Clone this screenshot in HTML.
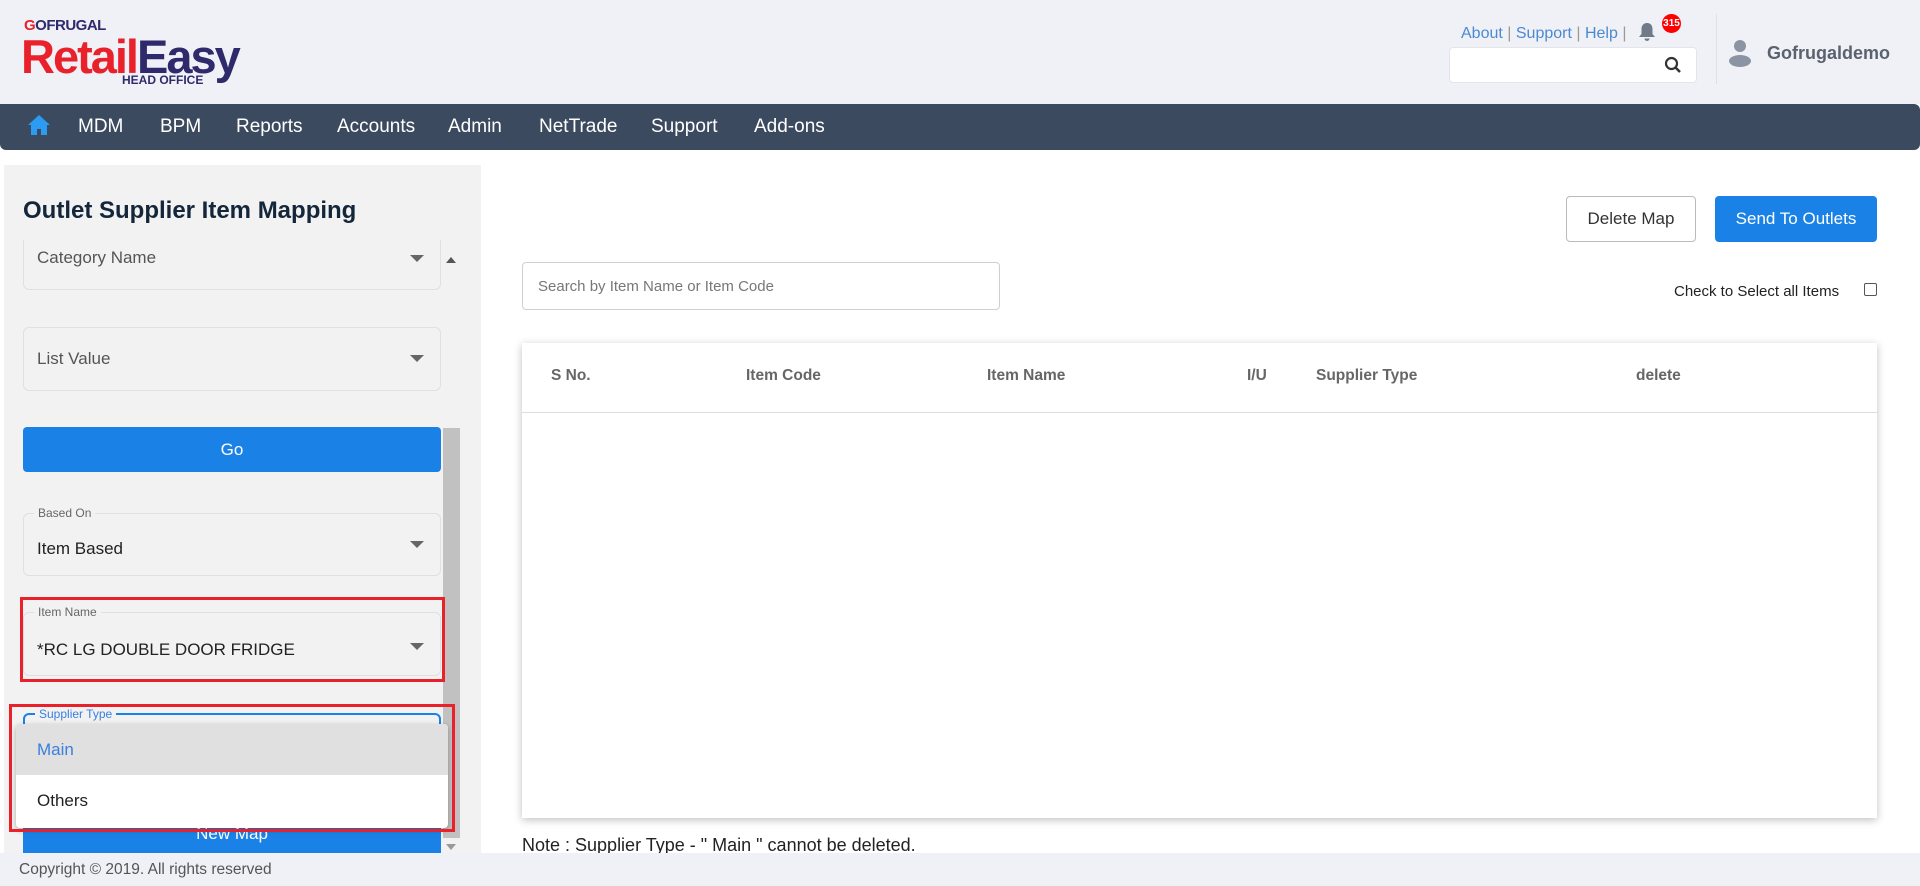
<!DOCTYPE html>
<html><head><meta charset="utf-8"><style>
*{box-sizing:border-box;margin:0;padding:0}
body{width:1920px;height:886px;overflow:hidden;background:#fff;font-family:"Liberation Sans",sans-serif;position:relative}
.a{position:absolute}
.hdr{left:0;top:0;width:1920px;height:104px;background:#f0f1f6}
.nav{left:0;top:104px;width:1920px;height:46px;background:#3c4a5f;border-radius:0 6px 6px 6px}
.nav span{position:absolute;top:12px;color:#fff;font-size:19px}
.panel{left:4px;top:165px;width:477px;height:688px;background:#f2f2f2}
.fld{position:absolute;left:23px;width:418px;border:1.5px solid #dde0e4;border-radius:6px}
.fld .v{position:absolute;left:13px;font-size:17px;color:#222}
.fld .c{position:absolute;right:16px;width:0;height:0;border-left:7px solid transparent;border-right:7px solid transparent;border-top:7px solid #666}
.lbl{position:absolute;left:10px;top:-8px;font-size:12px;color:#666;background:#f2f2f2;padding:0 4px}
.btn{position:absolute;background:#1a82e6;color:#fff;text-align:center;border-radius:4px;font-size:17px}
.th{position:absolute;top:367px;font-size:15.5px;font-weight:bold;color:#666}
</style></head><body>
<div class="a hdr"></div>
<div class="a" style="left:24px;top:17px;font-size:15px;font-weight:bold;color:#2e2a6b;letter-spacing:-0.5px"><span style="color:#e8212b">G</span>OFRUGAL</div>
<div class="a" style="left:21px;top:33px;font-size:47px;font-weight:bold;letter-spacing:-2px;line-height:48px"><span style="color:#e8212b">Retail</span><span style="color:#2e2a6b">Easy</span></div>
<div class="a" style="left:122px;top:73px;font-size:12px;font-weight:bold;color:#2e2a6b">HEAD OFFICE</div>

<div class="a" style="left:1461px;top:25px;font-size:16px;color:#4a8ad0">About <span style="color:#999">|</span> Support <span style="color:#999">|</span> Help <span style="color:#999">|</span></div>
<svg class="a" style="left:1638px;top:22px" width="18" height="20" viewBox="0 0 18 20"><path d="M9 1c-3.5 0-5.5 2.5-5.5 6v5L1 15h16l-2.5-3V7C14.5 3.5 12.5 1 9 1z M6.5 16.5a2.5 2.5 0 0 0 5 0z" fill="#707a88"/></svg>
<div class="a" style="left:1662px;top:14px;width:19px;height:19px;border-radius:50%;background:#f00;color:#fff;font-size:10px;font-weight:bold;line-height:19px;text-align:center">315</div>
<div class="a" style="left:1449px;top:47px;width:248px;height:36px;background:#fff;border:1px solid #e3e5ea;border-radius:4px"></div>
<svg class="a" style="left:1664px;top:56px" width="18" height="18" viewBox="0 0 18 18"><circle cx="7.5" cy="7.5" r="5.5" stroke="#333" stroke-width="2.2" fill="none"/><path d="M11.5 11.5L16 16" stroke="#333" stroke-width="2.5"/></svg>
<div class="a" style="left:1716px;top:14px;width:1px;height:70px;background:#dde0e6"></div>
<svg class="a" style="left:1728px;top:38px" width="24" height="30" viewBox="0 0 24 30"><circle cx="12" cy="8" r="6" fill="#8a94a2"/><ellipse cx="12" cy="23" rx="11" ry="6" fill="#8a94a2"/></svg>
<div class="a" style="left:1767px;top:43px;font-size:18px;font-weight:bold;color:#5a6270">Gofrugaldemo</div>

<div class="a nav">
<svg style="position:absolute;left:27px;top:9px" width="24" height="24" viewBox="0 0 24 24"><path d="M12 2L1 12h3v10h6v-6h4v6h6V12h3z" fill="#2b9bf4"/></svg>
<span style="left:78px">MDM</span><span style="left:160px">BPM</span><span style="left:236px">Reports</span><span style="left:337px">Accounts</span><span style="left:448px">Admin</span><span style="left:539px">NetTrade</span><span style="left:651px">Support</span><span style="left:754px">Add-ons</span>
</div>

<div class="a panel"></div>
<div class="a" style="left:23px;top:197px;font-size:24px;font-weight:bold;color:#14263a">Outlet Supplier Item Mapping</div>
<div class="fld" style="top:240px;height:50px;border-top:none;border-radius:0 0 6px 6px"><div class="v" style="top:8px;color:#555">Category Name</div><div class="c" style="top:15px"></div></div>
<div class="fld" style="top:327px;height:64px"><div class="v" style="top:21px;color:#555">List Value</div><div class="c" style="top:27px"></div></div>
<div class="btn" style="left:23px;top:427px;width:418px;height:45px;line-height:45px">Go</div>
<div class="fld" style="top:513px;height:63px"><div class="lbl">Based On</div><div class="v" style="top:25px">Item Based</div><div class="c" style="top:27px"></div></div>
<div class="a" style="left:443px;top:428px;width:17px;height:410px;background:#c1c1c1"></div>
<div class="a" style="left:446px;top:257px;border-left:5px solid transparent;border-right:5px solid transparent;border-bottom:6px solid #555"></div>
<div class="a" style="left:446px;top:844px;border-left:5px solid transparent;border-right:5px solid transparent;border-top:6px solid #999"></div>
<div class="fld" style="top:612px;height:64px"><div class="lbl">Item Name</div><div class="v" style="top:27px">*RC LG DOUBLE DOOR FRIDGE</div><div class="c" style="top:30px"></div></div>
<div class="a" style="left:20px;top:597px;width:425px;height:85px;border:3px solid #e8212b"></div>
<div class="fld" style="top:713px;height:60px;border:2px solid #1a82e6"><div class="lbl" style="color:#3a7ee0">Supplier Type</div></div>
<div class="btn" style="left:23px;top:815px;width:418px;height:38px;line-height:38px;border-radius:0">New Map</div>
<div class="a" style="left:16px;top:724px;width:432px;height:104px;background:#fff;border-radius:4px;box-shadow:0 2px 6px rgba(0,0,0,.3);overflow:hidden">
<div style="height:51px;background:#e0e0e0;color:#3a7ee0;font-size:17px;padding:16px 21px">Main</div>
<div style="height:53px;color:#222;font-size:17px;padding:16px 21px">Others</div></div>
<div class="a" style="left:9px;top:704px;width:446px;height:128px;border:3px solid #e8212b"></div>

<div class="a" style="left:1566px;top:196px;width:130px;height:46px;border:1px solid #bbb;border-radius:4px;font-size:17px;color:#333;text-align:center;line-height:44px">Delete Map</div>
<div class="btn" style="left:1715px;top:196px;width:162px;height:46px;line-height:46px">Send To Outlets</div>
<div class="a" style="left:522px;top:262px;width:478px;height:48px;border:1px solid #ccd0d5;border-radius:4px;font-size:15px;color:#777;padding:15px 15px">Search by Item Name or Item Code</div>
<div class="a" style="left:1674px;top:283px;font-size:15px;color:#222">Check to Select all Items</div>
<div class="a" style="left:1864px;top:283px;width:13px;height:13px;border:1px solid #555;border-radius:2px"></div>
<div class="a" style="left:522px;top:343px;width:1355px;height:475px;background:#fff;box-shadow:0 2px 8px rgba(0,0,0,.25)"></div>
<div class="a" style="left:522px;top:412px;width:1355px;height:1px;background:#ddd"></div>
<div class="th" style="left:551px">S No.</div><div class="th" style="left:746px">Item Code</div><div class="th" style="left:987px">Item Name</div><div class="th" style="left:1247px">I/U</div><div class="th" style="left:1316px">Supplier Type</div><div class="th" style="left:1636px">delete</div>
<div class="a" style="left:522px;top:835px;font-size:18px;color:#222">Note : Supplier Type - " Main " cannot be deleted.</div>

<div class="a" style="left:0;top:853px;width:1920px;height:33px;background:#f0f1f6"></div>
<div class="a" style="left:19px;top:861px;font-size:15.5px;color:#555">Copyright © 2019. All rights reserved</div>
</body></html>
